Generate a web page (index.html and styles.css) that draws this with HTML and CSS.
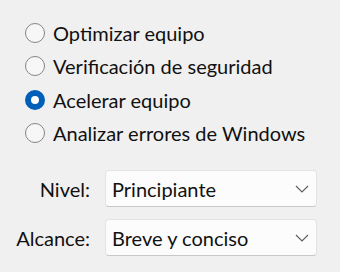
FILE: index.html
```html
<!DOCTYPE html>
<html lang="es">
<head>
    <meta charset="UTF-8">
    <title>Opciones</title>
    <link rel="stylesheet" href="styles.css">
</head>
<body>
    <div class="panel">
        <div class="radio-list">
            <label class="radio-row"><span class="radio"></span>Optimizar equipo</label>
            <label class="radio-row"><span class="radio"></span>Verificación de seguridad</label>
            <label class="radio-row"><span class="radio checked"></span>Acelerar equipo</label>
            <label class="radio-row"><span class="radio"></span>Analizar errores de Windows</label>
        </div>
        <div class="fields">
            <div class="field">
                <span class="field-label">Nivel:</span>
                <div class="combo">
                    <span class="combo-text">Principiante</span>
                    <svg class="chevron" width="14" height="8" viewBox="0 0 14 8"><path d="M1 1l6 6 6-6" fill="none" stroke="#606060" stroke-width="1.2"/></svg>
                </div>
            </div>
            <div class="field">
                <span class="field-label">Alcance:</span>
                <div class="combo">
                    <span class="combo-text">Breve y conciso</span>
                    <svg class="chevron" width="14" height="8" viewBox="0 0 14 8"><path d="M1 1l6 6 6-6" fill="none" stroke="#606060" stroke-width="1.2"/></svg>
                </div>
            </div>
        </div>
    </div>
</body>
</html>
```

FILE: styles.css
```css
body {
    margin: 0;
    padding: 0;
    background-color: #f0f0f0;
    font-family: Lato, "Liberation Sans", sans-serif;
    font-size: 20px;
    color: #111;
}

.panel {
    width: 340px;
    height: 272px;
    padding-top: 16px;
    box-sizing: border-box;
}

.radio-list {
    display: flex;
    flex-direction: column;
    padding-left: 25px;
}

.radio-row {
    display: flex;
    align-items: center;
    height: 33.5px;
}

.radio {
    width: 20px;
    height: 20px;
    border: 1.5px solid #858585;
    border-radius: 50%;
    margin-right: 8px;
    box-sizing: border-box;
    background-color: #f7f7f7;
}

.radio.checked {
    border: 6.5px solid #005fb8;
    background-color: #fff;
}

.fields {
    display: flex;
    flex-direction: column;
    gap: 12px;
    margin-top: 20px;
    padding-left: 10px;
}

.field {
    display: flex;
    align-items: center;
}

.field-label {
    width: 80px;
    text-align: right;
    margin-right: 15px;
}

.combo {
    width: 212px;
    height: 37px;
    box-sizing: border-box;
    background-color: #fcfcfc;
    border: 1px solid #e3e3e3;
    border-bottom-color: #c8c8c8;
    border-radius: 4px;
    display: flex;
    align-items: center;
    justify-content: space-between;
    padding: 0 7px 0 6px;
}
```
